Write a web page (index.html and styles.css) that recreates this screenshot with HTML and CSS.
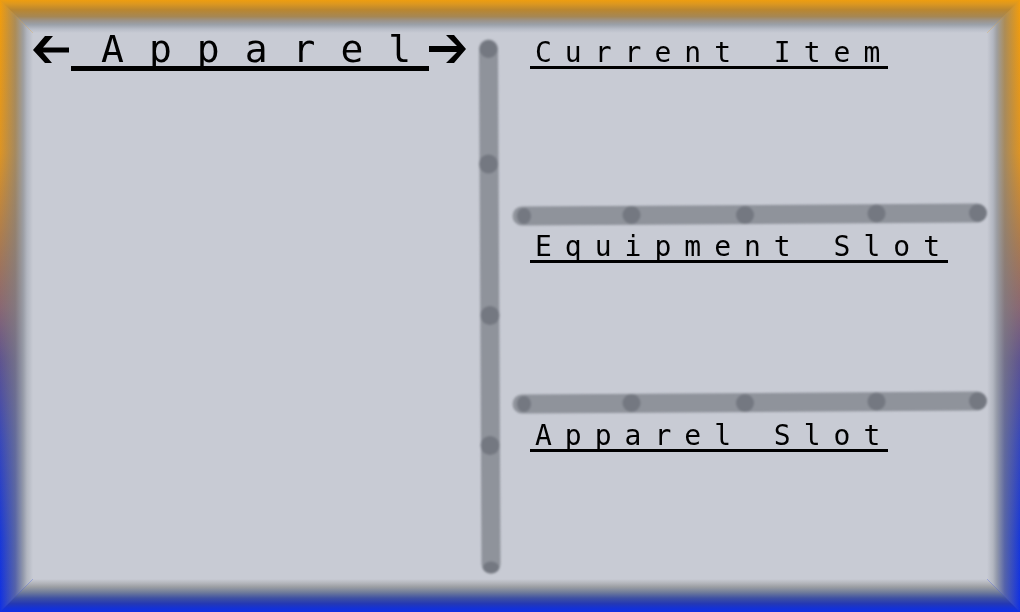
FILE: index.html
```html
<!DOCTYPE html>
<html lang="en">
<head>
<meta charset="utf-8">
<meta name="viewport" content="width=device-width, initial-scale=1">
<title>Apparel</title>
<link rel="stylesheet" href="styles.css">
</head>
<body>
<div class="frame" aria-hidden="true">
  <div class="edge edge-top"></div>
  <div class="edge edge-bottom"></div>
  <div class="edge edge-left"></div>
  <div class="edge edge-right"></div>
</div>
<main class="inventory">
  <section class="browser">
    <header class="pager">
      <button class="arrow" type="button" aria-label="Previous category">
        <svg viewBox="0 0 39 34" width="39" height="34"><path d="M1 18 13 4h8L11 15.500h26v5H11L20 31h-7Z"/></svg>
      </button>
      <h1 class="title">Apparel</h1>
      <button class="arrow" type="button" aria-label="Next category">
        <svg viewBox="0 0 39 34" width="39" height="34"><path d="M37 17 25 3h-8l11 11H0v6h28L17 31h8Z"/></svg>
      </button>
    </header>
  </section>

  <svg class="rail" viewBox="0 0 24 548" aria-hidden="true">
    <path class="rail-bar" d="M10.500 17 13 532"/>
    <g class="rail-dots">
      <circle cx="10.500" cy="17" r="9"/><circle cx="10.500" cy="132" r="9.500"/>
      <circle cx="12" cy="283.500" r="9.500"/><circle cx="12" cy="413.500" r="9.500"/>
      <ellipse cx="13" cy="535.500" rx="8" ry="6"/>
    </g>
  </svg>

  <div class="slots">
    <section class="slot"><h2 class="slot-name"><span class="slot-text">Current Item</span></h2></section>
    <svg class="divider" viewBox="0 0 476 24" aria-hidden="true">
      <path class="rail-bar" d="M10 14 465 11"/>
      <g class="rail-dots">
        <ellipse cx="12" cy="14" rx="7" ry="8"/><circle cx="119.500" cy="13" r="9"/>
        <circle cx="233" cy="13" r="9"/><circle cx="364.500" cy="11.500" r="9"/><circle cx="466" cy="11" r="9"/>
      </g>
    </svg>
    <section class="slot"><h2 class="slot-name"><span class="slot-text">Equipment Slot</span></h2></section>
    <svg class="divider" viewBox="0 0 476 24" aria-hidden="true">
      <path class="rail-bar" d="M10 13 465 10"/>
      <g class="rail-dots">
        <ellipse cx="12" cy="13" rx="7" ry="8"/><circle cx="119.500" cy="12" r="9"/>
        <circle cx="233" cy="12" r="9"/><circle cx="364.500" cy="10.500" r="9"/><circle cx="466" cy="10" r="9"/>
      </g>
    </svg>
    <section class="slot"><h2 class="slot-name"><span class="slot-text">Apparel Slot</span></h2></section>
  </div>
</main>
</body>
</html>
```
FILE: styles.css
```css
* {
  box-sizing: border-box;
}

body {
  margin: 0;
  background: #c8cbd4;
  color: #000;
  font-family: "DejaVu Sans Mono", monospace;
}

/* Glowing mitred frame */
.frame {
  position: fixed;
  inset: 0;
  pointer-events: none;
}

.edge {
  position: absolute;
}

.edge-top {
  inset: 0 0 auto;
  height: 33px;
  background: linear-gradient(#ee9d10, #dc9720 12%, #b98630 30%, #a68754 50%, #9c9388 62%, #9ba1aa 75%, #b7bcc7 88%, #c8cbd4);
}

.edge-bottom {
  inset: auto 0 0;
  height: 33px;
  background: linear-gradient(to top, #1030e4, #1532d4 12%, #2438b4 25%, #3f51a2 42%, #717d9b 60%, #9b9ea3 76%, #b4b6bc 88%, #c8cbd4);
}

.edge-left,
.edge-right {
  top: 0;
  bottom: 0;
  width: 33px;
}

.edge-left {
  left: 0;
  background:
    linear-gradient(to right, #80808000, #80808044 20%, #80828699 46%, #9a9fa8f0 70%, #b2b6c0 82%, #c8cbd4),
    linear-gradient(#f29d0c, #dd9424 25%, #a97a51 40%, #8a6872 50%, #5e5490 59%, #3848ba 72%, #1838d8 88%, #1030e4);
  clip-path: polygon(0 0, 100% 33px, 100% calc(100% - 33px), 0 100%);
}

.edge-right {
  right: 0;
  background:
    linear-gradient(to left, #80808000, #80808044 20%, #80828699 46%, #9a9fa8f0 70%, #b2b6c0 82%, #c8cbd4),
    linear-gradient(#f29d0c, #dd9424 25%, #a97a51 40%, #8a6872 50%, #5e5490 59%, #3848ba 72%, #1838d8 88%, #1030e4);
  clip-path: polygon(0 33px, 100% 0, 100% 100%, 0 calc(100% - 33px));
}

/* Layout */
.inventory {
  position: relative;
  display: grid;
  grid-template-columns: minmax(0, 436fr) 24px minmax(0, 476fr);
  gap: 10px;
  min-height: 100vh;
  padding: 32px;
}

.pager {
  display: flex;
  align-items: flex-start;
}

.arrow {
  flex: none;
  padding: 0;
  border: 0;
  background: none;
  cursor: pointer;
}

.arrow svg {
  display: block;
}

.title {
  flex: 1;
  min-width: 0;
  margin: 0;
  padding-left: 30px;
  border-bottom: 5px solid #000;
  font-size: 38px;
  font-weight: 400;
  line-height: 34px;
  letter-spacing: 25px;
  white-space: nowrap;
}

.slots {
  display: grid;
  grid-template-rows: 170fr auto 165fr auto 165fr;
}

.slot {
  padding-left: 18px;
}

.slot-name {
  width: fit-content;
  margin: 0;
  padding: 8px 0 0 5px;
  border-bottom: 3px solid #000;
  font-size: 28px;
  font-weight: 400;
  line-height: 26px;
  letter-spacing: 13px;
  white-space: nowrap;
}

.slot-text {
  display: block;
  margin-right: -5px;
}

/* Studded rails */
.rail,
.divider {
  display: block;
  width: 100%;
  overflow: visible;
  filter: blur(1px);
}

.rail {
  height: 100%;
}

.rail-bar {
  fill: none;
  stroke: #8f939b;
  stroke-width: 19px;
  stroke-linecap: round;
}

.rail-dots {
  fill: #747881;
}
```
